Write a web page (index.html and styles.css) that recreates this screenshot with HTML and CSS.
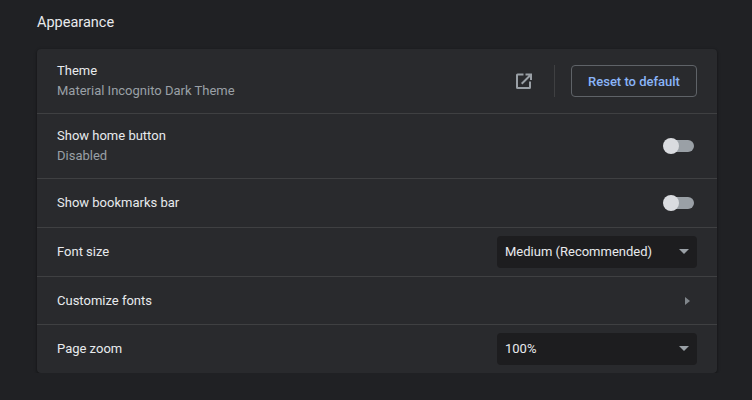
FILE: index.html

```html
<!DOCTYPE html>
<html lang="en">
<head>
    <meta charset="UTF-8">
    <title>Appearance</title>
    <link rel="stylesheet" href="styles.css">
</head>
<body>

<div class="page">
    <h2 class="section-title">Appearance</h2>

    <div class="card">
        <div class="row row-theme">
            <div class="row-text">
                <div class="label">Theme</div>
                <div class="sublabel">Material Incognito Dark Theme</div>
            </div>
            <svg class="open-icon" width="20" height="20" viewBox="0 0 20 20">
                <path d="M9.500 2.500H3.500A1.500 1.500 0 0 0 2 4v12.500A1.500 1.500 0 0 0 3.500 18h12a1.500 1.500 0 0 0 1.500-1.500v-6h-2V16H4V4.500h5.500z M11.500 2.500v2h3.100L7 12.100 8.400 13.500 16 5.900V9h2V2.500z"/>
            </svg>
            <div class="divider"></div>
            <button class="outline-btn">Reset to default</button>
        </div>

        <div class="row row-double">
            <div class="row-text">
                <div class="label">Show home button</div>
                <div class="sublabel">Disabled</div>
            </div>
            <div class="toggle"><span class="knob"></span></div>
        </div>

        <div class="row">
            <div class="row-text">
                <div class="label">Show bookmarks bar</div>
            </div>
            <div class="toggle"><span class="knob"></span></div>
        </div>

        <div class="row">
            <div class="row-text">
                <div class="label">Font size</div>
            </div>
            <div class="select">Medium (Recommended)<span class="caret"></span></div>
        </div>

        <div class="row row-short">
            <div class="row-text">
                <div class="label">Customize fonts</div>
            </div>
            <span class="arrow"></span>
        </div>

        <div class="row">
            <div class="row-text">
                <div class="label">Page zoom</div>
            </div>
            <div class="select">100%<span class="caret"></span></div>
        </div>
    </div>
</div>

</body>
</html>
```

FILE: styles.css

```css
/* Page */
body {
    margin: 0;
    background-color: #202124;
    font-family: Roboto, "Liberation Sans", sans-serif;
    font-size: 13px;
    color: #e8eaed;
    overflow: hidden;
}

.page {
    width: 680px;
    margin-left: 37px;
}

.section-title {
    margin: 0;
    padding-top: 14px;
    height: 35px;
    line-height: 17px;
    font-size: 14.5px;
    font-weight: 400;
    color: #e8eaed;
}

/* Card */
.card {
    background: #292a2d;
    border-radius: 4px;
    box-shadow: 0 1px 2px rgba(0, 0, 0, 0.3), 0 1px 3px 1px rgba(0, 0, 0, 0.15);
}

.row {
    display: flex;
    align-items: center;
    height: 48px;
    padding: 0 20px;
    border-top: 1px solid #3f4042;
}

.row:first-child {
    border-top: none;
}

.row-theme {
    height: 64px;
}

.row-double {
    height: 64px;
}

.row-short {
    height: 47px;
}

.row-text {
    flex: 1;
}

.label {
    line-height: 20px;
}

.sublabel {
    line-height: 20px;
    color: #9aa0a6;
}

/* Theme row controls */
.open-icon {
    fill: #9aa0a6;
}

.divider {
    width: 1px;
    height: 32px;
    margin: 0 16px 0 20px;
    background: #3f4042;
}

.outline-btn {
    width: 126px;
    height: 32px;
    padding: 0;
    background: transparent;
    border: 1px solid #5f6368;
    border-radius: 4px;
    color: #8ab4f8;
    font-family: inherit;
    font-size: 13px;
    font-weight: 500;
}

/* Toggle */
.toggle {
    position: relative;
    width: 30px;
    height: 12px;
    margin-right: 3px;
    background: #9aa0a6;
    border-radius: 6px;
}

.knob {
    position: absolute;
    left: -1px;
    top: -2px;
    width: 16px;
    height: 16px;
    background: #dadce0;
    border-radius: 50%;
}

/* Dropdown */
.select {
    position: relative;
    width: 192px;
    height: 32px;
    padding-left: 8px;
    line-height: 31px;
    background: #1d1d1f;
    border-radius: 4px;
    color: #e8eaed;
}

.caret {
    position: absolute;
    right: 8px;
    top: 13px;
    border-left: 5px solid transparent;
    border-right: 5px solid transparent;
    border-top: 5px solid #9aa0a6;
}

.arrow {
    margin-right: 7px;
    border-top: 4px solid transparent;
    border-bottom: 4px solid transparent;
    border-left: 5px solid #80868b;
}
```
